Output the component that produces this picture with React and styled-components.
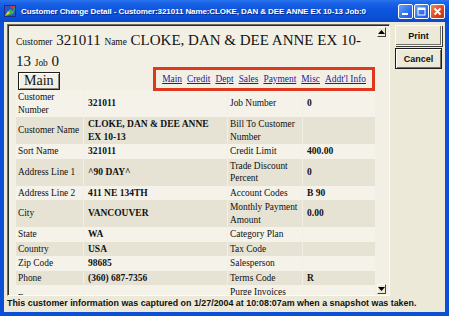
import React from 'react';
import styled, { createGlobalStyle } from 'styled-components';

const GlobalStyle = createGlobalStyle`
  html, body {
    margin: 0;
    padding: 0;
    width: 449px;
    height: 316px;
    overflow: hidden;
    background: #0b4fd6;
  }
`;

const rows = [
  ['Customer Number', '321011', 'Job Number', '0'],
  ['Customer Name', 'CLOKE, DAN & DEE ANNE EX 10-13', 'Bill To Customer Number', ''],
  ['Sort Name', '321011', 'Credit Limit', '400.00'],
  ['Address Line 1', '^90 DAY^', 'Trade Discount Percent', '0'],
  ['Address Line 2', '411 NE 134TH', 'Account Codes', 'B 90'],
  ['City', 'VANCOUVER', 'Monthly Payment Amount', '0.00'],
  ['State', 'WA', 'Category Plan', ''],
  ['Country', 'USA', 'Tax Code', ''],
  ['Zip Code', '98685', 'Salesperson', ''],
  ['Phone', '(360) 687-7356', 'Terms Code', 'R'],
  ['Fax', '', 'Purge Invoices After', ''],
  ['Email', '', 'Statement Type', ''],
];

const links = ['Main', 'Credit', 'Dept', 'Sales', 'Payment', 'Misc', "Addt'l Info"];

const App = () => {
  return (
    <>
      <GlobalStyle />
      <Window>
        <TitleBar>
          <TitleIcon width="12" height="12" viewBox="0 0 12 12">
            <rect x="0" y="0" width="12" height="12" fill="#1c2f8c" />
            <rect x="1" y="1" width="10" height="10" fill="#2a54c8" />
            <path d="M1 11 L6 4 L9 6 L11 1 L11 4 L9 9 Z" fill="#33b84a" />
            <path d="M1 11 L4 6 L6 8 Z" fill="#e8d630" />
            <path d="M6 1 L11 1 L9 4 Z" fill="#e23a2a" />
          </TitleIcon>
          <TitleText>Customer Change Detail - Customer:321011 Name:CLOKE, DAN &amp; DEE ANNE EX 10-13 Job:0</TitleText>
          <CaptionButtons>
            <CaptionButton>
              <svg width="13" height="13" viewBox="0 0 13 13"><rect x="3" y="8" width="6" height="2" fill="#fff" /></svg>
            </CaptionButton>
            <CaptionButton>
              <svg width="13" height="13" viewBox="0 0 13 13"><rect x="3" y="3" width="7" height="7" fill="none" stroke="#fff" strokeWidth="1" /><rect x="3" y="3" width="7" height="2" fill="#fff" /></svg>
            </CaptionButton>
            <CaptionButton $close>
              <svg width="13" height="13" viewBox="0 0 13 13"><path d="M3.5 3.5 L9.5 9.5 M9.5 3.5 L3.5 9.5" stroke="#fff" strokeWidth="1.8" /></svg>
            </CaptionButton>
          </CaptionButtons>
        </TitleBar>
        <Frame>
          <Client>
            <TopArea>
              <Panel>
                <Page>
                  <Heading>
                    <Small>Customer</Small> 321011 <Small>Name</Small> CLOKE, DAN &amp; DEE ANNE EX 10-13 <Small>Job</Small> 0
                  </Heading>
                  <TabRow>
                    <TabBox>Main</TabBox>
                    <LinkBox>
                      {links.map((l) => (
                        <LinkItem key={l}>{l}</LinkItem>
                      ))}
                    </LinkBox>
                  </TabRow>
                  <Table>
                    <colgroup>
                      <col style={{ width: 67 }} />
                      <col style={{ width: 143 }} />
                      <col style={{ width: 74 }} />
                      <col style={{ width: 72 }} />
                    </colgroup>
                    <tbody>
                      {rows.map((r, i) => (
                        <Row key={i} $dark={i % 2 === 1}>
                          <Label>{r[0]}</Label>
                          <Value>{r[1]}</Value>
                          <Label>{r[2]}</Label>
                          <Value>{r[3]}</Value>
                        </Row>
                      ))}
                    </tbody>
                  </Table>
                </Page>
                <ScrollBar>
                  <ScrollArrow>
                    <svg width="7" height="4" viewBox="0 0 7 4"><path d="M0 4 L3.5 0 L7 4 Z" fill="#000" /></svg>
                  </ScrollArrow>
                  <ScrollArrow>
                    <svg width="7" height="4" viewBox="0 0 7 4"><path d="M0 0 L3.5 4 L7 0 Z" fill="#000" /></svg>
                  </ScrollArrow>
                </ScrollBar>
              </Panel>
              <ButtonColumn>
                <PushButton>Print</PushButton>
                <PushButton $default>Cancel</PushButton>
              </ButtonColumn>
            </TopArea>
            <Status>This customer information was captured on 1/27/2004 at 10:08:07am when a snapshot was taken.</Status>
          </Client>
        </Frame>
      </Window>
    </>
  );
};

export default App;

const Window = styled.div`
  width: 449px;
  height: 316px;
  display: flex;
  flex-direction: column;
  background: #0b4fd6;
  font-family: "Liberation Sans", Arial, sans-serif;
`;

const TitleBar = styled.div`
  height: 22px;
  flex: none;
  display: flex;
  align-items: center;
  padding: 0 4px 0 4px;
  background: linear-gradient(to bottom, #2a74ef 0%, #1b62e6 15%, #0c55dc 45%, #0a50d6 80%, #0b48c4 100%);
`;

const TitleIcon = styled.svg`
  flex: none;
  margin-right: 5px;
`;

const TitleText = styled.div`
  flex: 1;
  color: #fff;
  font-size: 8px;
  letter-spacing: -0.1px;
  font-weight: bold;
  white-space: nowrap;
  overflow: hidden;
  text-shadow: 1px 1px 0 #0a2a8a;
`;

const CaptionButtons = styled.div`
  display: flex;
  gap: 1px;
`;

const CaptionButton = styled.div`
  width: 13px;
  height: 13px;
  border: 1px solid #fff;
  border-radius: 2px;
  background: ${(p) =>
    p.$close
      ? 'linear-gradient(135deg, #f08a5e 0%, #d9441d 60%, #c13510 100%)'
      : 'linear-gradient(135deg, #6aa2f8 0%, #2e6ef0 60%, #1f57d8 100%)'};
  display: flex;
  align-items: center;
  justify-content: center;
  svg {
    display: block;
  }
`;

const Frame = styled.div`
  flex: 1;
  display: flex;
  padding: 0 4px 4px 4px;
  min-height: 0;
`;

const Client = styled.div`
  flex: 1;
  background: #ece9d8;
  display: flex;
  flex-direction: column;
  min-height: 0;
`;

const TopArea = styled.div`
  display: flex;
  padding: 2px 3px 0 3px;
  gap: 5px;
`;

const Panel = styled.div`
  width: 383px;
  height: 272px;
  box-sizing: border-box;
  display: flex;
  border-top: 1px solid #6f6d63;
  border-left: 1px solid #6f6d63;
  border-right: 1px solid #fbfaf4;
  border-bottom: 1px solid #fbfaf4;
  box-shadow: inset 1px 1px 0 #2d2c28;
  background: #f2f0e4;
`;

const Page = styled.div`
  flex: 1;
  overflow: hidden;
  padding: 5px 0 0 8px;
  font-family: "Liberation Serif", "Times New Roman", serif;
  color: #111;
`;

const Heading = styled.div`
  width: 356px;
  font-size: 15px;
  line-height: 20.5px;
`;

const Small = styled.span`
  font-size: 9.4px;
  line-height: 9px;
`;

const TabRow = styled.div`
  display: flex;
  align-items: flex-end;
  height: 19px;
  padding-left: 2px;
  width: 357px;
`;

const TabBox = styled.div`
  font-size: 14px;
  line-height: 16px;
  padding: 0 5px;
  border: 1px solid #1e1e1e;
  box-shadow: inset 1px 1px 0 #fff, inset -1px -1px 0 #8a887c;
  height: 16px;
`;

const LinkBox = styled.div`
  margin-left: auto;
  height: 18px;
  margin-bottom: -1px;
  border: 3px solid #e0381c;
  display: flex;
  align-items: center;
  gap: 5px;
  padding: 0 6px 0 6px;
  background: #f2f0e4;
  position: relative;
  z-index: 1;
`;

const LinkItem = styled.span`
  font-size: 9.4px;
  color: #1a1aa8;
  text-decoration: underline;
  white-space: nowrap;
`;

const Table = styled.table`
  table-layout: fixed;
  width: 357px;
  border-collapse: separate;
  border-spacing: 1px 0;
  margin-left: -1px;
`;

const Row = styled.tr`
  td {
    background: ${(p) => (p.$dark ? '#e6e3d4' : '#f4f2e9')};
  }
`;

const Label = styled.td`
  font-size: 9.4px;
  line-height: 12.5px;
  padding: 1px 2px;
  vertical-align: middle;
`;

const Value = styled.td`
  font-size: 9.5px;
  line-height: 12.5px;
  font-weight: bold;
  padding: 1px 4px;
  vertical-align: middle;
`;

const ScrollBar = styled.div`
  width: 11px;
  flex: none;
  display: flex;
  flex-direction: column;
  justify-content: space-between;
  padding: 2px 1px 1px 0;
`;

const ScrollArrow = styled.div`
  width: 9px;
  height: 10px;
  box-sizing: border-box;
  background: #ece9d8;
  border-top: 1px solid #fff;
  border-left: 1px solid #fff;
  border-right: 1px solid #404040;
  border-bottom: 1px solid #404040;
  display: flex;
  align-items: center;
  justify-content: center;
  svg {
    display: block;
  }
`;

const ButtonColumn = styled.div`
  display: flex;
  flex-direction: column;
  gap: 2px;
  padding-top: 1px;
`;

const PushButton = styled.div`
  width: 47px;
  height: 21px;
  box-sizing: border-box;
  display: flex;
  align-items: center;
  justify-content: center;
  font-size: 9px;
  font-weight: bold;
  color: #111;
  background: #ece9d8;
  border: 1px solid ${(p) => (p.$default ? '#1a1a1a' : '#fbfaf4')};
  box-shadow: ${(p) =>
    p.$default
      ? 'inset 1px 1px 0 #fff, inset -1px -1px 0 #716f64'
      : 'inset -1px -1px 0 #716f64, 1px 1px 0 #3a3a36'};
`;

const Status = styled.div`
  margin-top: auto;
  height: 16px;
  line-height: 15px;
  padding-left: 3px;
  font-size: 8.9px;
  font-weight: bold;
  color: #111;
  white-space: nowrap;
`;
